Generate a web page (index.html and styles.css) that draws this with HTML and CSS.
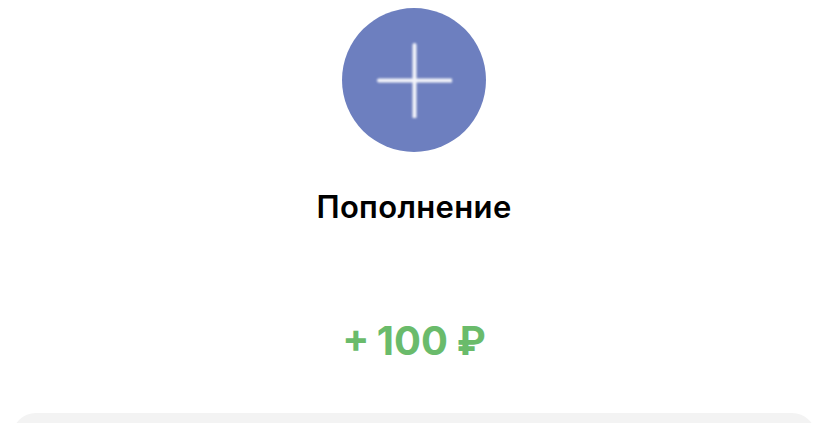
FILE: index.html
```html
<!DOCTYPE html>
<html lang="ru">
<head>
    <meta charset="UTF-8">
    <meta name="viewport" content="width=device-width, initial-scale=1.0">
    <title>Пополнение</title>
    <link rel="stylesheet" href="styles.css">
</head>
<body>

    <div class="operation">
        <div class="icon">
            <svg class="plus" width="76" height="76" viewBox="0 0 76 76">
                <path d="M38.5 3V75M3 38.5H75" fill="none" stroke="#f4f5fa" stroke-width="4" stroke-linecap="round"/>
            </svg>
        </div>
        <h1 class="title">Пополнение</h1>
        <div class="amount">+ 100 <span class="currency">₽</span></div>
        <div class="details"></div>
    </div>

</body>
</html>
```

FILE: styles.css
```css
html, body {
    height: 100%;
}
body {
    margin: 0;
    background-color: #fff;
    overflow: hidden;
    font-family: Inter, "Liberation Sans", sans-serif;
}
.operation {
    display: flex;
    flex-direction: column;
    align-items: center;
    height: 100%;
    overflow: hidden;
    padding-top: 8px;
    box-sizing: border-box;
}
.icon {
    display: flex;
    flex-shrink: 0;
    align-items: center;
    justify-content: center;
    width: 144px;
    height: 144px;
    border-radius: 50%;
    background-color: #6d7fbf;
}
.plus {
    filter: blur(0.8px);
}
.title {
    margin: 37px 0 0;
    font-size: 31px;
    line-height: 36px;
    font-weight: 600;
    letter-spacing: 0.35px;
    color: #000;
}
.amount {
    margin-top: 91px;
    font-size: 40px;
    line-height: 50px;
    font-weight: 700;
    word-spacing: -2px;
    color: #6abb6b;
}
.currency {
    font-family: Roboto, sans-serif;
    line-height: 1;
    margin-left: 2px;
}
.details {
    align-self: stretch;
    flex-shrink: 0;
    height: 60px;
    margin: 47px 12px 0;
    border-radius: 24px;
    background-color: #f3f3f3;
}
```
